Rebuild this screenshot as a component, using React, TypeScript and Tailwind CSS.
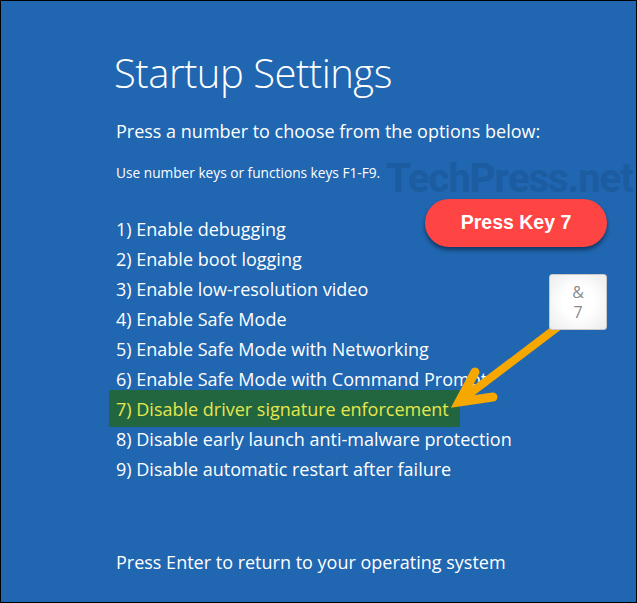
import React from "react";

const options = [
  "1) Enable debugging",
  "2) Enable boot logging",
  "3) Enable low-resolution video",
  "4) Enable Safe Mode",
  "5) Enable Safe Mode with Networking",
  "6) Enable Safe Mode with Command Prompt",
  "7) Disable driver signature enforcement",
  "8) Disable early launch anti-malware protection",
  "9) Disable automatic restart after failure",
];

export default function App() {
  return (
    <div className="relative w-[637px] h-[603px] overflow-hidden border border-black bg-[#2066b1] text-white font-['Open_Sans',sans-serif]">
      <div className="flex flex-col pl-[113px] pt-[51px]">
        <h1 className="text-[40px] font-light leading-[42px] tracking-[-0.5px] whitespace-nowrap">Startup Settings</h1>
        <p className="mt-[23px] pl-[2px] text-[18px] leading-[28px] whitespace-nowrap">
          Press a number to choose from the options below:
        </p>
        <p className="mt-[18px] pl-[2px] text-[13.7px] leading-[20px] whitespace-nowrap">
          Use number keys or functions keys F1-F9.
        </p>
        <div className="mt-[31px] flex flex-col pl-[2px]">
          {options.map((o, i) =>
            i === 6 ? (
              <div
                key={o}
                className="-mt-[4px] -mb-[3px] -ml-[7px] flex h-[37px] w-[351px] items-center whitespace-nowrap bg-[#22663f] pl-[7px] text-[18px] leading-[30px] text-[#e6e64c]"
              >
                {o}
              </div>
            ) : (
              <div key={o} className="flex h-[30px] items-center whitespace-nowrap text-[18px] leading-[30px]">
                {o}
              </div>
            )
          )}
        </div>
        <p className="mt-[63px] pl-[2px] text-[18px] leading-[30px] whitespace-nowrap">
          Press Enter to return to your operating system
        </p>
      </div>

      {/* watermark */}
      <div className="absolute left-[385px] top-[156px] whitespace-nowrap text-[40px] font-bold leading-[44px] tracking-[-1px] text-[#1c5ca0] font-['Roboto',sans-serif]">
        TechPress.net
      </div>

      {/* arrow */}
      <svg className="pointer-events-none absolute left-0 top-0" width="637" height="603" viewBox="0 0 637 603">
        <line x1="558" y1="325" x2="463" y2="397" stroke="#f6a800" strokeWidth="8" />
        <polyline
          points="474,371 458,401 492,396"
          fill="none"
          stroke="#f6a800"
          strokeWidth="9"
          strokeLinejoin="miter"
          strokeLinecap="round"
        />
      </svg>

      {/* keycap */}
      <div className="absolute left-[548px] top-[273px] flex h-[56px] w-[58px] flex-col items-center justify-center rounded-[3px] border border-[#c9c9c9] bg-[radial-gradient(circle,#ffffff_40%,#ececec_100%)] text-[16px] leading-[20px] text-[#8a8a8a] font-['Open_Sans',sans-serif]">
        <span>&amp;</span>
        <span>7</span>
      </div>

      {/* pill */}
      <div className="absolute left-[424px] top-[198px] flex h-[48px] w-[182px] items-center justify-center rounded-full bg-[#ff4444] text-[19.5px] font-bold text-white shadow-[0_3px_4px_rgba(0,0,0,0.45)] font-['Liberation_Sans',Arial,sans-serif]">
        Press Key 7
      </div>
    </div>
  );
}
